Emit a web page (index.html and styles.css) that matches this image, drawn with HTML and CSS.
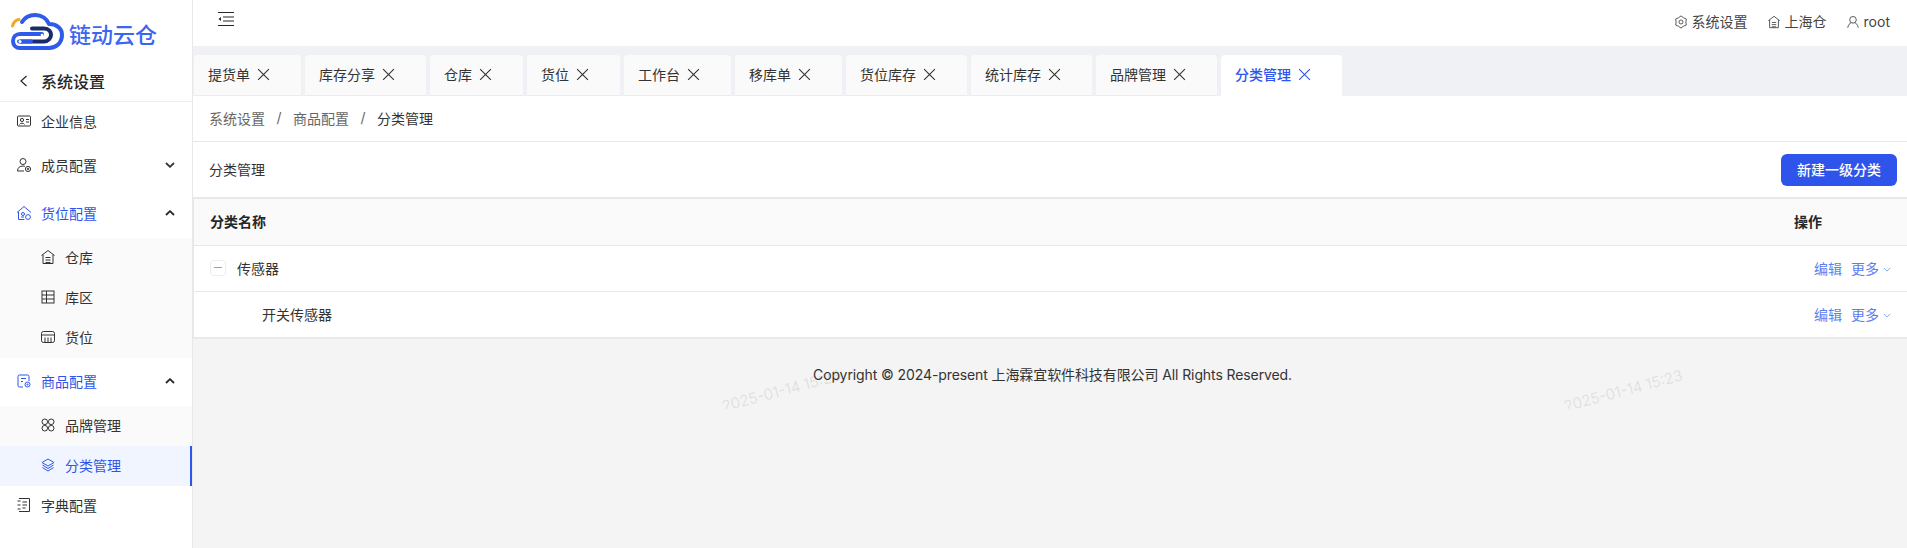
FILE: index.html
```html
<!DOCTYPE html>
<html lang="zh">
<head>
<meta charset="utf-8">
<title>分类管理</title>
<link rel="stylesheet" href="styles.css">
</head>
<body>
<div class="app">
  <aside class="sidebar">
    <div class="logo">
      <svg class="logo-mark" viewBox="0 0 54 38" fill="none" stroke-linecap="round" stroke-linejoin="round">
        <path d="M1.500 13C2.500 9 5 7 8 6.500" stroke="#f5a623" stroke-width="3"/>
        <path d="M11 9C14 4 19 2 24 2C31 2 36 6 38 11C45 11 51 15 51 22C51 30 45 35 38 35H9C5 35 2 32 2 28C2 24 5 21 9 21H31" stroke="#2f5bea" stroke-width="4"/>
        <path d="M21 15.500H33C38 15.500 40 19 40 22C40 25 37 28.500 33 28.500H10" stroke="#1b2a6b" stroke-width="4"/>
        <path d="M8 28.500H20" stroke="#2f5bea" stroke-width="4"/>
        <circle cx="9" cy="28.500" r="1.500" fill="#fff"/>
        <circle cx="31" cy="22" r="1.300" fill="#fff"/>
      </svg>
      <span class="logo-text">链动云仓</span>
    </div>
    <div class="back">
      <svg class="back-icon" viewBox="0 0 12 12" fill="none" stroke="#262626" stroke-width="1.200"><path d="M8.500 1L3 6l5.500 5"/></svg>
      <span>系统设置</span>
    </div>
    <nav class="menu">
      <a class="item short">
        <svg class="ic" viewBox="0 0 16 16" fill="none" stroke="currentColor"><rect x="1.500" y="3" width="13" height="10" rx="1"/><circle cx="6" cy="7" r="1.600"/><path d="M3.500 11.500C4 9.800 8 9.800 8.500 11.500M10 6.500h3M10 9h3"/></svg>
        <span>企业信息</span>
      </a>
      <a class="item">
        <svg class="ic" viewBox="0 0 16 16" fill="none" stroke="currentColor"><circle cx="7" cy="4.500" r="3"/><path d="M1.500 14C1.500 10.500 4 9 7 9c1 0 1.500.2 2 .4M1.500 14H8"/><circle cx="12" cy="12" r="2.600"/><circle cx="12" cy="12" r=".8"/></svg>
        <span>成员配置</span>
        <svg class="caret" viewBox="0 0 10 6" fill="none" stroke="currentColor" stroke-width="1.800"><path d="M1 1l4 3.800L9 1"/></svg>
      </a>
      <a class="item active-parent">
        <svg class="ic" viewBox="0 0 16 16" fill="none" stroke="currentColor"><path d="M1 7.500L8 1.500l7 6M2.500 7v7.500h6"/><circle cx="7" cy="9" r="1.500"/><circle cx="12" cy="12" r="2.400"/><path d="M5 12h3"/></svg>
        <span>货位配置</span>
        <svg class="caret up" viewBox="0 0 10 6" fill="none" stroke="#262626" stroke-width="1.800"><path d="M1 5l4-3.800L9 5"/></svg>
      </a>
      <div class="sub">
        <a class="subitem">
          <svg class="ic" viewBox="0 0 16 16" fill="none" stroke="currentColor"><path d="M1.500 6.500L8 1.500l6.500 5M3 5.500v9h10v-9M5.500 8.500h5M5.500 11h5M5.500 13.500h5"/></svg>
          <span>仓库</span>
        </a>
        <a class="subitem">
          <svg class="ic" viewBox="0 0 16 16" fill="none" stroke="currentColor"><rect x="2" y="2" width="12" height="12"/><path d="M2 6h12M2 10h12M6.500 2v12"/></svg>
          <span>库区</span>
        </a>
        <a class="subitem">
          <svg class="ic" viewBox="0 0 16 16" fill="none" stroke="currentColor"><rect x="1.500" y="2.500" width="13" height="11" rx="2"/><path d="M1.500 6h13M5 8.500v5M8 8.500v5M11 8.500v5"/></svg>
          <span>货位</span>
        </a>
      </div>
      <a class="item active-parent">
        <svg class="ic" viewBox="0 0 16 16" fill="none" stroke="currentColor"><path d="M7 14H3.500a1.500 1.500 0 0 1-1.500-1.500v-9A1.500 1.500 0 0 1 3.500 2h8A1.500 1.500 0 0 1 13 3.500V8M5 5.500h5M5 8.500h2"/><circle cx="11.500" cy="11.500" r="2.500"/><circle cx="11.500" cy="11.500" r=".6"/></svg>
        <span>商品配置</span>
        <svg class="caret up" viewBox="0 0 10 6" fill="none" stroke="#262626" stroke-width="1.800"><path d="M1 5l4-3.800L9 5"/></svg>
      </a>
      <div class="sub">
        <a class="subitem">
          <svg class="ic" viewBox="0 0 16 16" fill="none" stroke="currentColor"><circle cx="4.800" cy="4.800" r="2.800"/><circle cx="11.200" cy="4.800" r="2.800"/><circle cx="4.800" cy="11.200" r="2.800"/><circle cx="11.200" cy="11.200" r="2.800"/></svg>
          <span>品牌管理</span>
        </a>
        <a class="subitem selected">
          <svg class="ic" viewBox="0 0 16 16" fill="none" stroke="currentColor"><path d="M8 2l6 3.500L8 9 2 5.500zM2.500 8L8 11.500 13.500 8M2.500 10.500L8 14l5.500-3.500"/></svg>
          <span>分类管理</span>
        </a>
      </div>
      <a class="item short">
        <svg class="ic" viewBox="0 0 16 16" fill="none" stroke="currentColor"><path d="M3 1.500h10.500v13H3M1.500 4h3M1.500 8h3M1.500 12h3M6.500 5h4.500M6.500 8h4.500M6.500 11h3"/></svg>
        <span>字典配置</span>
      </a>
    </nav>
  </aside>

  <main class="main">
    <header class="topbar">
      <svg class="fold" viewBox="0 0 16 14" fill="none" stroke="#262626"><path d="M0 .5h16M5 5h11M5 9h11M0 13.500h16"/><path d="M3 5L.5 7 3 9z" fill="#262626" stroke="none"/></svg>
      <div class="top-actions">
        <span class="top-link">
          <svg class="top-ic" viewBox="0 0 16 16" fill="none" stroke="currentColor" stroke-linejoin="round"><path d="M8 1l2.800 2.150 3.260 1.350-.46 3.500.46 3.500-3.260 1.350L8 15l-2.800-2.150-3.260-1.350L2.400 8l-.46-3.500L5.200 3.150z"/><circle cx="8" cy="8" r="2.300"/></svg>
          系统设置
        </span>
        <span class="top-link">
          <svg class="top-ic" viewBox="0 0 16 16" fill="none" stroke="currentColor"><path d="M1.500 6.500L8 1.500l6.500 5M3 5.500v9h10v-9M5.500 8.500h5M5.500 11h5M5.500 13.500h5"/></svg>
          上海仓
        </span>
        <span class="top-link">
          <svg class="top-ic" viewBox="0 0 16 16" fill="none" stroke="currentColor"><circle cx="8" cy="5.500" r="3.800"/><path d="M2 14.500c.5-3.500 2.500-5.200 4-5.500M14 14.500c-.5-3.500-2.500-5.200-4-5.500"/></svg>
          root
        </span>
      </div>
    </header>

    <div class="tabs">
      <div class="tab">提货单<svg class="x" viewBox="0 0 12 12"><path d="M1 1l10 10M11 1L1 11"/></svg></div>
      <div class="tab">库存分享<svg class="x" viewBox="0 0 12 12"><path d="M1 1l10 10M11 1L1 11"/></svg></div>
      <div class="tab">仓库<svg class="x" viewBox="0 0 12 12"><path d="M1 1l10 10M11 1L1 11"/></svg></div>
      <div class="tab">货位<svg class="x" viewBox="0 0 12 12"><path d="M1 1l10 10M11 1L1 11"/></svg></div>
      <div class="tab">工作台<svg class="x" viewBox="0 0 12 12"><path d="M1 1l10 10M11 1L1 11"/></svg></div>
      <div class="tab">移库单<svg class="x" viewBox="0 0 12 12"><path d="M1 1l10 10M11 1L1 11"/></svg></div>
      <div class="tab">货位库存<svg class="x" viewBox="0 0 12 12"><path d="M1 1l10 10M11 1L1 11"/></svg></div>
      <div class="tab">统计库存<svg class="x" viewBox="0 0 12 12"><path d="M1 1l10 10M11 1L1 11"/></svg></div>
      <div class="tab">品牌管理<svg class="x" viewBox="0 0 12 12"><path d="M1 1l10 10M11 1L1 11"/></svg></div>
      <div class="tab current">分类管理<svg class="x" viewBox="0 0 12 12"><path d="M1 1l10 10M11 1L1 11"/></svg></div>
    </div>

    <div class="crumbs">
      <span class="crumb">系统设置</span><span class="sep">/</span>
      <span class="crumb">商品配置</span><span class="sep">/</span>
      <span class="crumb last">分类管理</span>
    </div>

    <div class="toolbar">
      <span class="toolbar-title">分类管理</span>
      <button class="primary">新建一级分类</button>
    </div>

    <div class="table">
      <div class="row head">
        <span class="name">分类名称</span>
        <span class="ops">操作</span>
      </div>
      <div class="row">
        <span class="name">
          <span class="expander"><span class="dash"></span></span>
          传感器
        </span>
        <span class="ops">
          <a class="link">编辑</a>
          <a class="link">更多<svg class="more" viewBox="0 0 10 6" fill="none" stroke="currentColor"><path d="M1 1l4 4 4-4"/></svg></a>
        </span>
      </div>
      <div class="row">
        <span class="name child">开关传感器</span>
        <span class="ops">
          <a class="link">编辑</a>
          <a class="link">更多<svg class="more" viewBox="0 0 10 6" fill="none" stroke="currentColor"><path d="M1 1l4 4 4-4"/></svg></a>
        </span>
      </div>
    </div>

    <footer class="footer">
      <div class="marks">
        <span class="mark">2025-01-14 15:23</span>
        <span class="mark">2025-01-14 15:23</span>
      </div>
      <p class="copyright">Copyright © 2024-present 上海霖宜软件科技有限公司 All Rights Reserved.</p>
    </footer>
  </main>
</div>
</body>
</html>
```
FILE: styles.css
```css
* { box-sizing: border-box; }
html, body { margin: 0; height: 100%; overflow: hidden; }
body {
  font-family: Inter, "Noto Sans CJK SC", sans-serif;
  font-size: 14px;
  color: #333;
  background: #f4f4f4;
}
svg { display: block; flex: none; }
a { color: inherit; text-decoration: none; }

.app { display: flex; height: 548px; }

.sidebar {
  width: 193px;
  flex: none;
  background: #fff;
  border-right: 1px solid #e8e8e8;
}
.logo { height: 60px; display: flex; align-items: center; padding: 4px 0 0 11px; gap: 4px; }
.logo-mark { width: 54px; height: 38px; }
.logo-text { font-size: 22px; line-height: 30px; color: #3b66f0; font-weight: 500; margin-top: 6px; }
.back {
  height: 42px;
  display: flex;
  align-items: center;
  padding: 0 0 0 18px;
  gap: 11px;
  font-size: 16px;
  font-weight: 500;
  color: #262626;
  border-bottom: 1px solid #ececec;
}
.back-icon { width: 12px; height: 12px; }

.item { height: 48px; display: flex; align-items: center; padding: 0 0 2px 16px; color: #333; }
.item.short { height: 40px; }
.item .ic { margin-right: 9px; }
.item.active-parent { color: #2f54eb; }
.ic { width: 16px; height: 16px; stroke-width: 1; }
.caret { width: 10px; height: 6px; margin-left: auto; margin-right: 17px; }

.sub { background: #fafafa; }
.subitem { height: 40px; display: flex; align-items: center; padding: 0 0 2px 40px; gap: 9px; color: #333; }
.subitem.selected {
  background: #f0f5ff;
  color: #2f54eb;
  border-right: 2px solid #2f54eb;
}

.main { flex: 1; min-width: 0; display: flex; flex-direction: column; }

.topbar {
  height: 46px;
  flex: none;
  background: #fff;
  display: flex;
  align-items: flex-start;
  justify-content: space-between;
  padding: 12px 17px 0 25px;
}
.fold { width: 16px; height: 14px; }
.top-actions { display: flex; gap: 19px; font-size: 14px; color: #444; padding-top: 2px; }
.top-link { display: flex; align-items: center; gap: 4px; line-height: 16px; }
.top-ic { width: 14px; height: 14px; stroke-width: 1; }

.tabs {
  height: 50px;
  flex: none;
  background: #f0f1f5;
  display: flex;
  align-items: flex-end;
  gap: 4px;
  padding-left: 1px;
}
.tab {
  height: 41px;
  padding: 0 29px 2px 14px;
  display: flex;
  align-items: center;
  gap: 6px;
  background: #fafafa;
  border-radius: 4px 4px 0 0;
  border-bottom: 1px solid #ececec;
  color: #333;
  white-space: nowrap;
}
.x { width: 13px; height: 13px; margin-left: 1px; margin-right: 2px; fill: none; stroke: currentColor; stroke-width: 1; }
.tab.current { background: #fff; color: #2f54eb; border-bottom-color: #fff; font-weight: 500; }

.crumbs {
  height: 46px;
  flex: none;
  background: #fff;
  border-bottom: 1px solid #e8e8e8;
  display: flex;
  align-items: center;
  padding: 0 0 2px 16px;
  gap: 11.500px;
  color: #666;
}
.crumb.last { color: #333; }
.sep { color: #666; }

.toolbar {
  height: 55px;
  flex: none;
  background: #fff;
  display: flex;
  align-items: center;
  justify-content: space-between;
  padding: 0 10px 0 16px;
}
.toolbar-title { color: #333; padding-bottom: 2px; }
.primary {
  width: 116px;
  height: 32px;
  border: 0;
  border-radius: 6px;
  padding: 0 0 2px;
  background: #2f54eb;
  color: #fff;
  font: 500 14px Inter, "Noto Sans CJK SC", sans-serif;
}

.table {
  flex: none;
  background: #fff;
  border: 2px solid #e6e8ec;
  border-right: 0;
  border-left-width: 1px;
}
.row {
  height: 46px;
  display: flex;
  align-items: center;
  justify-content: space-between;
  padding: 0 16px 2px 16px;
  border-top: 1px solid #e6e8ec;
}
.row.head {
  border-top: 0;
  background: #fafafa;
  font-weight: 600;
  color: #262626;
  padding-right: 85px;
}
.name { display: flex; align-items: center; }
.name.child { padding-left: 52px; }
.expander {
  width: 16px;
  height: 16px;
  margin-right: 11px;
  border: 1px solid #eee;
  border-radius: 4px;
  background: #fff;
  display: flex;
  align-items: center;
  justify-content: center;
}
.dash { width: 8px; height: 1px; background: #36cfc9; }
.ops { display: flex; align-items: center; gap: 9px; }
.link { display: flex; align-items: center; gap: 4px; color: #5b7ff0; }
.more { width: 8px; height: 5px; margin-top: 3px; stroke-width: 1; color: #5b9bf0; }

.footer { position: relative; flex: 1; }
.copyright {
  position: relative;
  margin: 0;
  padding: 26px 0 0 5px;
  line-height: 20px;
  letter-spacing: -0.1px;
  text-align: center;
  color: #333;
  font-size: 14px;
}
.marks {
  position: absolute;
  top: 0;
  left: 0;
  right: 0;
  height: 70px;
  overflow: hidden;
}
.mark {
  position: absolute;
  top: 42px;
  font-size: 15px;
  line-height: 20px;
  color: #ddd;
  white-space: nowrap;
  transform: rotate(-15deg);
  font-weight: 300;
}
.mark:first-child { left: 527px; }
.mark:last-child { left: 1369px; }
```
